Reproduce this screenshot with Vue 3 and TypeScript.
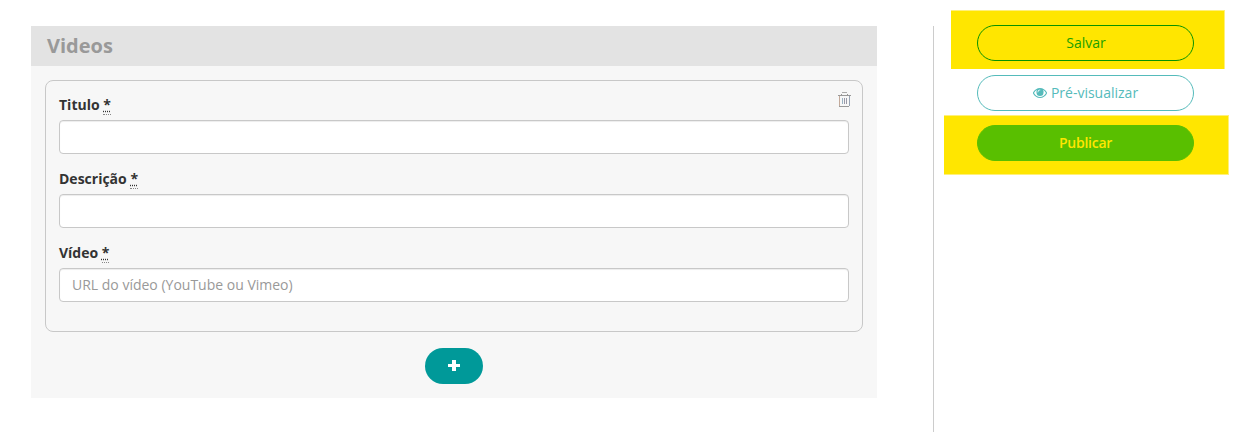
<script setup lang="ts">
import { ref } from 'vue'

interface Field {
  id: string
  label: string
  placeholder: string
}

const fields: Field[] = [
  { id: 'title', label: 'Titulo', placeholder: '' },
  { id: 'description', label: 'Descrição', placeholder: '' },
  { id: 'video', label: 'Vídeo', placeholder: 'URL do vídeo (YouTube ou Vimeo)' },
]

const values = ref<Record<string, string>>({ title: '', description: '', video: '' })
</script>

<template>
  <div class="page">
    <section class="panel">
      <h2 class="panel-title">Videos</h2>
      <div class="card">
        <button class="remove" type="button" aria-label="Remover">
          <svg width="14" height="15" viewBox="0 0 14 15" fill="none" stroke="#999" shape-rendering="crispEdges">
            <path d="M1 3.5H14M4.5 3V1.5M10.5 3V1.5M2 14.5H12" />
            <path d="M5 .5H10" stroke="#aaa" />
            <path d="M2.500 4V14" stroke="#c3aa9b" />
            <path d="M12.500 4V14" stroke="#98a4b4" />
            <path d="M5.500 6V12" stroke="#9ab3c3" />
            <path d="M7.500 6V12M9.500 6V12" stroke="#9a9aa8" />
          </svg>
        </button>
        <div v-for="field in fields" :key="field.id" class="field">
          <label :for="field.id">{{ field.label }} <abbr title="obrigatório">*</abbr></label>
          <input :id="field.id" v-model="values[field.id]" type="text" :placeholder="field.placeholder" />
        </div>
      </div>
      <button class="add" type="button" aria-label="Adicionar">
        <svg width="12" height="12" viewBox="0 0 12 12" shape-rendering="crispEdges">
          <path d="M4 0H8V4H12V7H8V11H4V7H0V4H4Z" fill="#fff" />
        </svg>
      </button>
    </section>
    <aside class="actions">
      <div class="action marked marked-save">
        <button class="btn save" type="button">Salvar</button>
      </div>
      <div class="action">
        <button class="btn preview" type="button">
          <svg width="14" height="10" viewBox="0 0 14 10">
            <path
              fill="#55bbbb"
              fill-rule="evenodd"
              d="M7 0C4.100 0 1.600 1.700 .150 4.300Q-.150 5 .150 5.700C1.600 8.300 4.100 10 7 10S12.400 8.300 13.850 5.700Q14.150 5 13.850 4.300C12.400 1.700 9.900 0 7 0ZM4.100 1.700A3.500 3.500 0 0 0 3.500 4.400A3.500 3.500 0 0 0 10.500 4.400A3.500 3.500 0 0 0 9.900 1.700Q11.700 2.700 13 5Q10.600 9 7 9T1 5Q2.300 2.700 4.100 1.700ZM7 1.500Q7.400 1.500 7.400 1.900T7 2.300Q5.400 2.300 5.300 4Q5.300 4.400 4.900 4.400T4.500 4Q4.600 1.600 7 1.500Z"
            />
          </svg>
          <span>Pré-visualizar</span>
        </button>
      </div>
      <div class="action marked marked-publish">
        <button class="btn publish" type="button">Publicar</button>
      </div>
    </aside>
  </div>
</template>

<style>
body {
  margin: 0;
  background: #fff;
}
</style>

<style scoped>
.page,
.page * {
  box-sizing: border-box;
}
.page {
  display: flex;
  align-items: flex-start;
  height: 432px;
  padding: 26px 0 0 31px;
  overflow: hidden;
  font: 14px/20px 'Open Sans', sans-serif;
  color: #333;
}
button,
input {
  font: inherit;
}
.panel {
  display: flex;
  flex-direction: column;
  width: 846px;
  height: 372px;
  background: #f7f7f7;
}
.panel-title {
  height: 40px;
  margin: 0 0 14px;
  padding: 0 16px;
  background: #e3e3e3;
  color: #999;
  font-size: 20px;
  font-weight: 700;
  line-height: 40px;
}
.card {
  position: relative;
  height: 252px;
  margin: 0 14px;
  padding: 14px 13px;
  border: 1px solid #c8c8c8;
  border-radius: 8px;
}
.remove {
  position: absolute;
  top: 11px;
  right: 11px;
  display: flex;
  padding: 0;
  border: 0;
  background: none;
}
.field {
  display: flex;
  flex-direction: column;
  height: 74px;
}
.field label {
  height: 25px;
  font-weight: 700;
  line-height: 20px;
}
.field abbr {
  border-bottom: 1px dotted #888;
  text-decoration: underline dotted;
}
.field input {
  width: 100%;
  height: 34px;
  padding: 5px 12px 7px;
  border: 1px solid #c8c8c8;
  border-radius: 4px;
  outline: none;
  background: #fff;
  box-shadow: inset 0 1px 1px rgba(0, 0, 0, 0.075);
  color: #555;
}
.field input::placeholder {
  color: #999;
  opacity: 1;
}
.add {
  display: flex;
  align-items: center;
  justify-content: center;
  align-self: center;
  width: 58px;
  height: 36px;
  margin-top: 16px;
  padding: 0;
  border: 0;
  border-radius: 18px;
  background: #099;
}
.actions {
  display: flex;
  flex-direction: column;
  gap: 14px;
  width: 304px;
  height: 406px;
  margin-left: 56px;
  padding-left: 43px;
  border-left: 1px solid #ccc;
}
.action {
  position: relative;
  width: 217px;
  height: 36px;
}
.action:first-child {
  margin-top: -1px;
}
.marked::before {
  content: '';
  position: absolute;
  border: 0 solid #fff07a;
  background: #ffe600;
}
.marked-save::before {
  inset: -15px -31px -8px -26px;
  border-width: 1px 1px 0 0;
}
.marked-publish::before {
  inset: -10px -35px -14px -33px;
  border-width: 1px 1px 1px 0;
}
.btn {
  position: relative;
  display: flex;
  align-items: center;
  justify-content: center;
  gap: 4px;
  width: 100%;
  height: 36px;
  padding: 0;
  border: 1px solid;
  border-radius: 18px;
  background: none;
}
.save {
  padding-left: 1px;
  border-color: #099300;
  color: #18a000;
}
.preview {
  border-color: #5bb;
  background: #fff;
  color: #5bb;
}
.publish {
  border-color: #59bf00;
  background: #59bf00;
  color: #ffe600;
  font-weight: 600;
  letter-spacing: -0.25px;
}
</style>
